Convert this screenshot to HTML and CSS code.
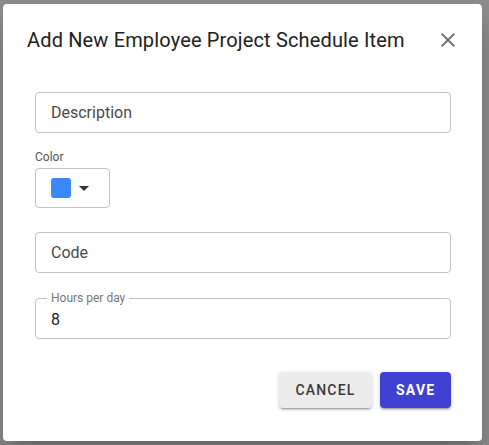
FILE: index.html
```html
<!DOCTYPE html>
<html lang="en">
<head>
    <meta charset="UTF-8">
    <meta name="viewport" content="width=device-width, initial-scale=1.0">
    <title>Add New Employee Project Schedule Item</title>
    <link rel="stylesheet" href="styles.css">
</head>
<body>
    <div class="dialog">
        <div class="dialog-title">
            <h2>Add New Employee Project Schedule Item</h2>
            <button class="close" aria-label="close">
                <svg viewBox="0 0 24 24" width="24" height="24"><path d="M19 6.41L17.59 5 12 10.59 6.41 5 5 6.41 10.59 12 5 17.59 6.41 19 12 13.41 17.59 19 19 17.59 13.41 12z"/></svg>
            </button>
        </div>

        <div class="dialog-content">
            <div class="field">
                <input type="text" placeholder="Description">
            </div>

            <div class="color-group">
                <span class="small-label">Color</span>
                <button class="color-btn">
                    <span class="swatch"></span>
                    <span class="caret"></span>
                </button>
            </div>

            <div class="field">
                <input type="text" placeholder="Code">
            </div>

            <div class="field filled">
                <label>Hours per day</label>
                <input type="text" value="8">
            </div>
        </div>

        <div class="dialog-actions">
            <button class="btn cancel">Cancel</button>
            <button class="btn save">Save</button>
        </div>
    </div>
</body>
</html>
```

FILE: styles.css
```css
body {
    margin: 0;
    height: 445px;
    background-color: #8c8c8c;
    font-family: Roboto, "Liberation Sans", sans-serif;
    padding: 4px 7px 0 3px;
    box-sizing: border-box;
}

.dialog {
    width: 479px;
    height: 437px;
    background-color: #fff;
    border-radius: 4px;
    box-shadow: 0 11px 15px -7px rgba(0, 0, 0, 0.2), 0 24px 38px 3px rgba(0, 0, 0, 0.14);
    display: flex;
    flex-direction: column;
    box-sizing: border-box;
}

.dialog-title {
    display: flex;
    align-items: center;
    justify-content: space-between;
    padding: 20px 22px 0 24px;
}

.dialog-title h2 {
    margin: 0;
    font-size: 20px;
    font-weight: 400;
    line-height: 32px;
    letter-spacing: 0.15px;
    color: #212121;
}

.close {
    border: none;
    background: none;
    padding: 0;
    width: 24px;
    height: 24px;
    cursor: pointer;
}

.close svg {
    fill: #757575;
    display: block;
}

.dialog-content {
    padding: 36px 31px 0 32px;
    display: flex;
    flex-direction: column;
}

.field {
    position: relative;
    height: 41px;
    border: 1px solid #c4c4c4;
    border-radius: 4px;
    box-sizing: border-box;
}

.field input {
    width: 100%;
    height: 100%;
    border: none;
    outline: none;
    background: transparent;
    padding: 0 15px;
    box-sizing: border-box;
    font-family: inherit;
    font-size: 16px;
    color: #212121;
}

.field input::placeholder {
    color: #4a4a4a;
}

.field label {
    position: absolute;
    top: -8px;
    left: 11px;
    padding: 0 4px;
    background-color: #fff;
    font-size: 12px;
    line-height: 14px;
    color: #777;
}

.field.filled {
    margin-top: 25px;
}

.field.filled input {
    padding-top: 2px;
}

.color-group {
    display: flex;
    flex-direction: column;
    align-items: flex-start;
    margin-top: 17px;
    margin-bottom: 24px;
}

.small-label {
    font-size: 12px;
    line-height: 14px;
    color: #555;
    margin-bottom: 4px;
}

.color-btn {
    width: 75px;
    height: 40px;
    border: 1px solid #c4c4c4;
    border-radius: 4px;
    background: #fff;
    display: flex;
    align-items: center;
    gap: 8px;
    padding: 0 0 0 15px;
    box-sizing: border-box;
    cursor: pointer;
}

.swatch {
    width: 20px;
    height: 20px;
    border-radius: 3px;
    background-color: #3b88fd;
}

.caret {
    width: 0;
    height: 0;
    border-left: 5px solid transparent;
    border-right: 5px solid transparent;
    border-top: 5px solid #333;
}

.dialog-actions {
    display: flex;
    justify-content: flex-end;
    gap: 8px;
    padding: 33px 31px 0 0;
}

.btn {
    height: 36px;
    border: none;
    border-radius: 4px;
    padding: 0 16px;
    font-family: inherit;
    font-size: 14px;
    font-weight: 500;
    letter-spacing: 1.2px;
    text-transform: uppercase;
    cursor: pointer;
    box-shadow: 0 3px 1px -2px rgba(0, 0, 0, 0.2), 0 2px 2px 0 rgba(0, 0, 0, 0.14), 0 1px 5px 0 rgba(0, 0, 0, 0.12);
}

.cancel {
    width: 93px;
    background-color: #ececec;
    color: #3a3a3a;
}

.save {
    width: 71px;
    background-color: #4040d3;
    color: #fff;
    font-weight: 700;
}
```
